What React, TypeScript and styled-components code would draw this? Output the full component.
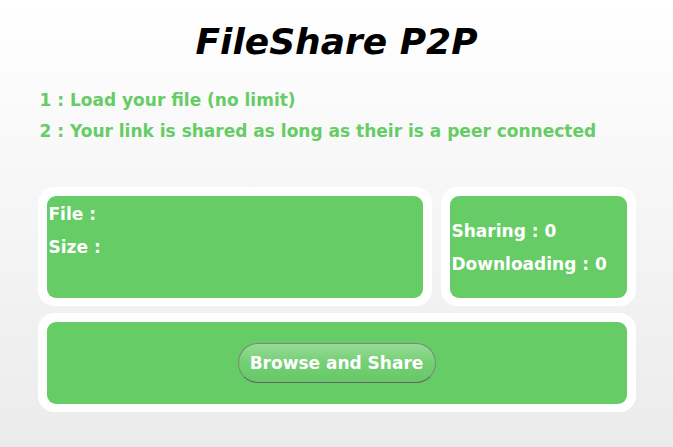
import React from "react";
import styled, { createGlobalStyle } from "styled-components";

const Global = createGlobalStyle`
  html, body { margin: 0; padding: 0; height: 100%; }
  body {
    background: linear-gradient(to bottom, #ffffff 0%, #ebebeb 100%);
    font-family: "DejaVu Sans", Verdana, sans-serif;
  }
  #root { min-height: 100%; }
`;

const Page = styled.div`
  width: 598px;
  margin: 0 auto;
  padding-top: 21px;
  display: flex;
  flex-direction: column;
  height: 447px;
  box-sizing: border-box;
`;

const Title = styled.h1`
  margin: 0;
  text-align: center;
  font-size: 36px;
  font-weight: bold;
  font-style: italic;
  color: #000;
  line-height: 42px;
`;

const Steps = styled.div`
  margin-top: 27px;
  padding-left: 2px;
  display: flex;
  flex-direction: column;
  gap: 11px;
`;

const Step = styled.div`
  color: #66cc66;
  font-weight: bold;
  font-size: 17px;
  line-height: 20px;
`;

const Row = styled.div`
  display: flex;
  gap: 9px;
  margin-top: 46px;
`;

const Frame = styled.div<{ $w?: number }>`
  background: #fff;
  border-radius: 16px;
  padding: 9px 9px 8px 9px;
  box-sizing: border-box;
  ${(p) => (p.$w ? `width: ${p.$w}px;` : "flex: 1;")}
`;

const Inner = styled.div<{ $h: number; $center?: boolean }>`
  background: #66cc66;
  border-radius: 9px;
  height: ${(p) => p.$h}px;
  box-sizing: border-box;
  color: #fff;
  font-weight: bold;
  font-size: 17px;
  display: flex;
  flex-direction: column;
  justify-content: ${(p) => (p.$center ? "center" : "flex-start")};
  padding: 8px 2px;
  gap: 13px;
`;

const Line = styled.div`
  line-height: 20px;
`;

const Bottom = styled.div`
  margin-top: 7px;
`;

const ButtonArea = styled.div`
  background: #66cc66;
  border-radius: 9px;
  height: 82px;
  display: flex;
  align-items: center;
  justify-content: center;
`;

const Button = styled.button`
  width: 198px;
  height: 40px;
  border-radius: 20px;
  border: 1px solid #7a8a7a;
  border-bottom-color: #666;
  background: linear-gradient(to bottom, #96dc96 0%, #74cf74 50%, #66c866 100%);
  color: #fff;
  font-family: "DejaVu Sans", Verdana, sans-serif;
  font-weight: bold;
  font-size: 17px;
  cursor: pointer;
  padding: 0;
`;

export default function App() {
  return (
    <>
      <Global />
      <Page>
        <Title>FileShare P2P</Title>
        <Steps>
          <Step>1 : Load your file (no limit)</Step>
          <Step>2 : Your link is shared as long as their is a peer connected</Step>
        </Steps>
        <Row>
          <Frame>
            <Inner $h={102}>
              <Line>File :</Line>
              <Line>Size :</Line>
            </Inner>
          </Frame>
          <Frame $w={195}>
            <Inner $h={102} $center>
              <Line>Sharing : 0</Line>
              <Line>Downloading : 0</Line>
            </Inner>
          </Frame>
        </Row>
        <Bottom>
          <Frame>
            <ButtonArea>
              <Button>Browse and Share</Button>
            </ButtonArea>
          </Frame>
        </Bottom>
      </Page>
    </>
  );
}
